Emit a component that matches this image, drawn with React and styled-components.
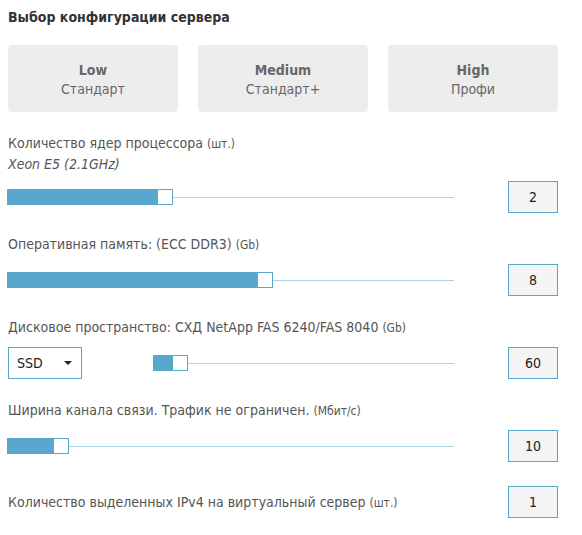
import styled, { createGlobalStyle } from "styled-components";

const GlobalStyle = createGlobalStyle`
  body {
    margin: 0;
    background: #fff;
    font-family: "DejaVu Sans Condensed", "DejaVu Sans", sans-serif;
    font-size: 14px;
    color: #555;
  }
`;

const plans = [
  { name: "Low", desc: "Стандарт" },
  { name: "Medium", desc: "Стандарт+" },
  { name: "High", desc: "Профи" },
];

function Slider({ width, fill }) {
  return (
    <Track width={width}>
      <Fill style={{ width: fill }} />
      <Handle />
      <Line />
    </Track>
  );
}

function App() {
  return (
    <>
      <GlobalStyle />
      <Page>
        <Title>Выбор конфигурации сервера</Title>

        <Plans>
          {plans.map((p) => (
            <Plan key={p.name}>
              <PlanName>{p.name}</PlanName>
              <PlanDesc>{p.desc}</PlanDesc>
            </Plan>
          ))}
        </Plans>

        <Section>
          <Label>
            Количество ядер процессора <Unit>(шт.)</Unit>
          </Label>
          <Sub>Xeon E5 (2.1GHz)</Sub>
          <Row tight>
            <Slider width={447} fill={150} />
            <Value>2</Value>
          </Row>
        </Section>

        <Section>
          <Label>
            Оперативная память: (ECC DDR3) <Unit>(Gb)</Unit>
          </Label>
          <Row>
            <Slider width={447} fill={250} />
            <Value>8</Value>
          </Row>
        </Section>

        <Section>
          <Label>
            Дисковое пространство: СХД NetApp FAS 6240/FAS 8040 <Unit>(Gb)</Unit>
          </Label>
          <Row>
            <Select>
              SSD
              <Caret />
            </Select>
            <Spacer />
            <Slider width={301} fill={19} />
            <Value>60</Value>
          </Row>
        </Section>

        <Section>
          <Label>
            Ширина канала связи. Трафик не ограничен. <Unit>(Мбит/с)</Unit>
          </Label>
          <Row>
            <Slider width={447} fill={46} />
            <Value>10</Value>
          </Row>
        </Section>

        <LastRow>
          <Label>
            Количество выделенных IPv4 на виртуальный сервер <Unit>(шт.)</Unit>
          </Label>
          <Value>1</Value>
        </LastRow>
      </Page>
    </>
  );
}

export default App;

const Page = styled.div`
  width: 550px;
  padding: 9px 24px 14px 8px;
`;

const Title = styled.h1`
  margin: 0;
  font-size: 14px;
  line-height: 16px;
  font-weight: bold;
  color: #333;
`;

const Plans = styled.div`
  display: grid;
  grid-template-columns: repeat(3, 1fr);
  gap: 20px;
  margin-top: 20px;
`;

const Plan = styled.div`
  box-sizing: border-box;
  height: 67px;
  padding-top: 2px;
  border-radius: 4px;
  background: #ededed;
  display: flex;
  flex-direction: column;
  align-items: center;
  justify-content: center;
  gap: 3px;
  color: #666;
`;

const PlanName = styled.div`
  font-weight: bold;
  line-height: 16px;
`;

const PlanDesc = styled.div`
  line-height: 16px;
`;

const Section = styled.div`
  margin-top: 23px;
  &:first-of-type {
    margin-top: 25px;
  }
`;

const Label = styled.div`
  line-height: 16px;
  color: #555;
`;

const Unit = styled.span`
  font-size: 12px;
`;

const Sub = styled.div`
  font-style: italic;
  line-height: 16px;
  margin-top: 4px;
`;

const Row = styled.div`
  display: flex;
  align-items: center;
  margin-top: ${({ tight }) => (tight ? 9 : 11)}px;
`;

const LastRow = styled.div`
  display: flex;
  align-items: center;
  justify-content: space-between;
  margin-top: 24px;
`;

const Track = styled.div`
  position: relative;
  display: flex;
  align-items: center;
  width: ${({ width }) => width}px;
  height: 16px;
  margin-left: -1px;
`;

const Line = styled.div`
  flex: 1;
  height: 1px;
  background: #a8d4e8;
`;

const Fill = styled.div`
  height: 16px;
  background: #5aa7cd;
`;

const Handle = styled.div`
  box-sizing: border-box;
  width: 16px;
  height: 16px;
  border: 1px solid #5aa7cd;
  background: #fff;
`;

const Value = styled.div`
  box-sizing: border-box;
  width: 50px;
  height: 32px;
  margin-left: auto;
  border: 1px solid #5aa7cd;
  background: #f4f4f4;
  color: #222;
  display: flex;
  align-items: center;
  justify-content: center;
  font-size: 14px;
`;

const Select = styled.div`
  box-sizing: border-box;
  width: 74px;
  height: 32px;
  border: 1px solid #5aa7cd;
  background: #fff;
  color: #222;
  display: flex;
  align-items: center;
  justify-content: space-between;
  padding: 0 9px 0 8px;
  font-size: 14px;
`;

const Caret = styled.span`
  width: 0;
  height: 0;
  border-left: 4px solid transparent;
  border-right: 4px solid transparent;
  border-top: 4px solid #222;
`;

const Spacer = styled.div`
  width: 72px;
`;
